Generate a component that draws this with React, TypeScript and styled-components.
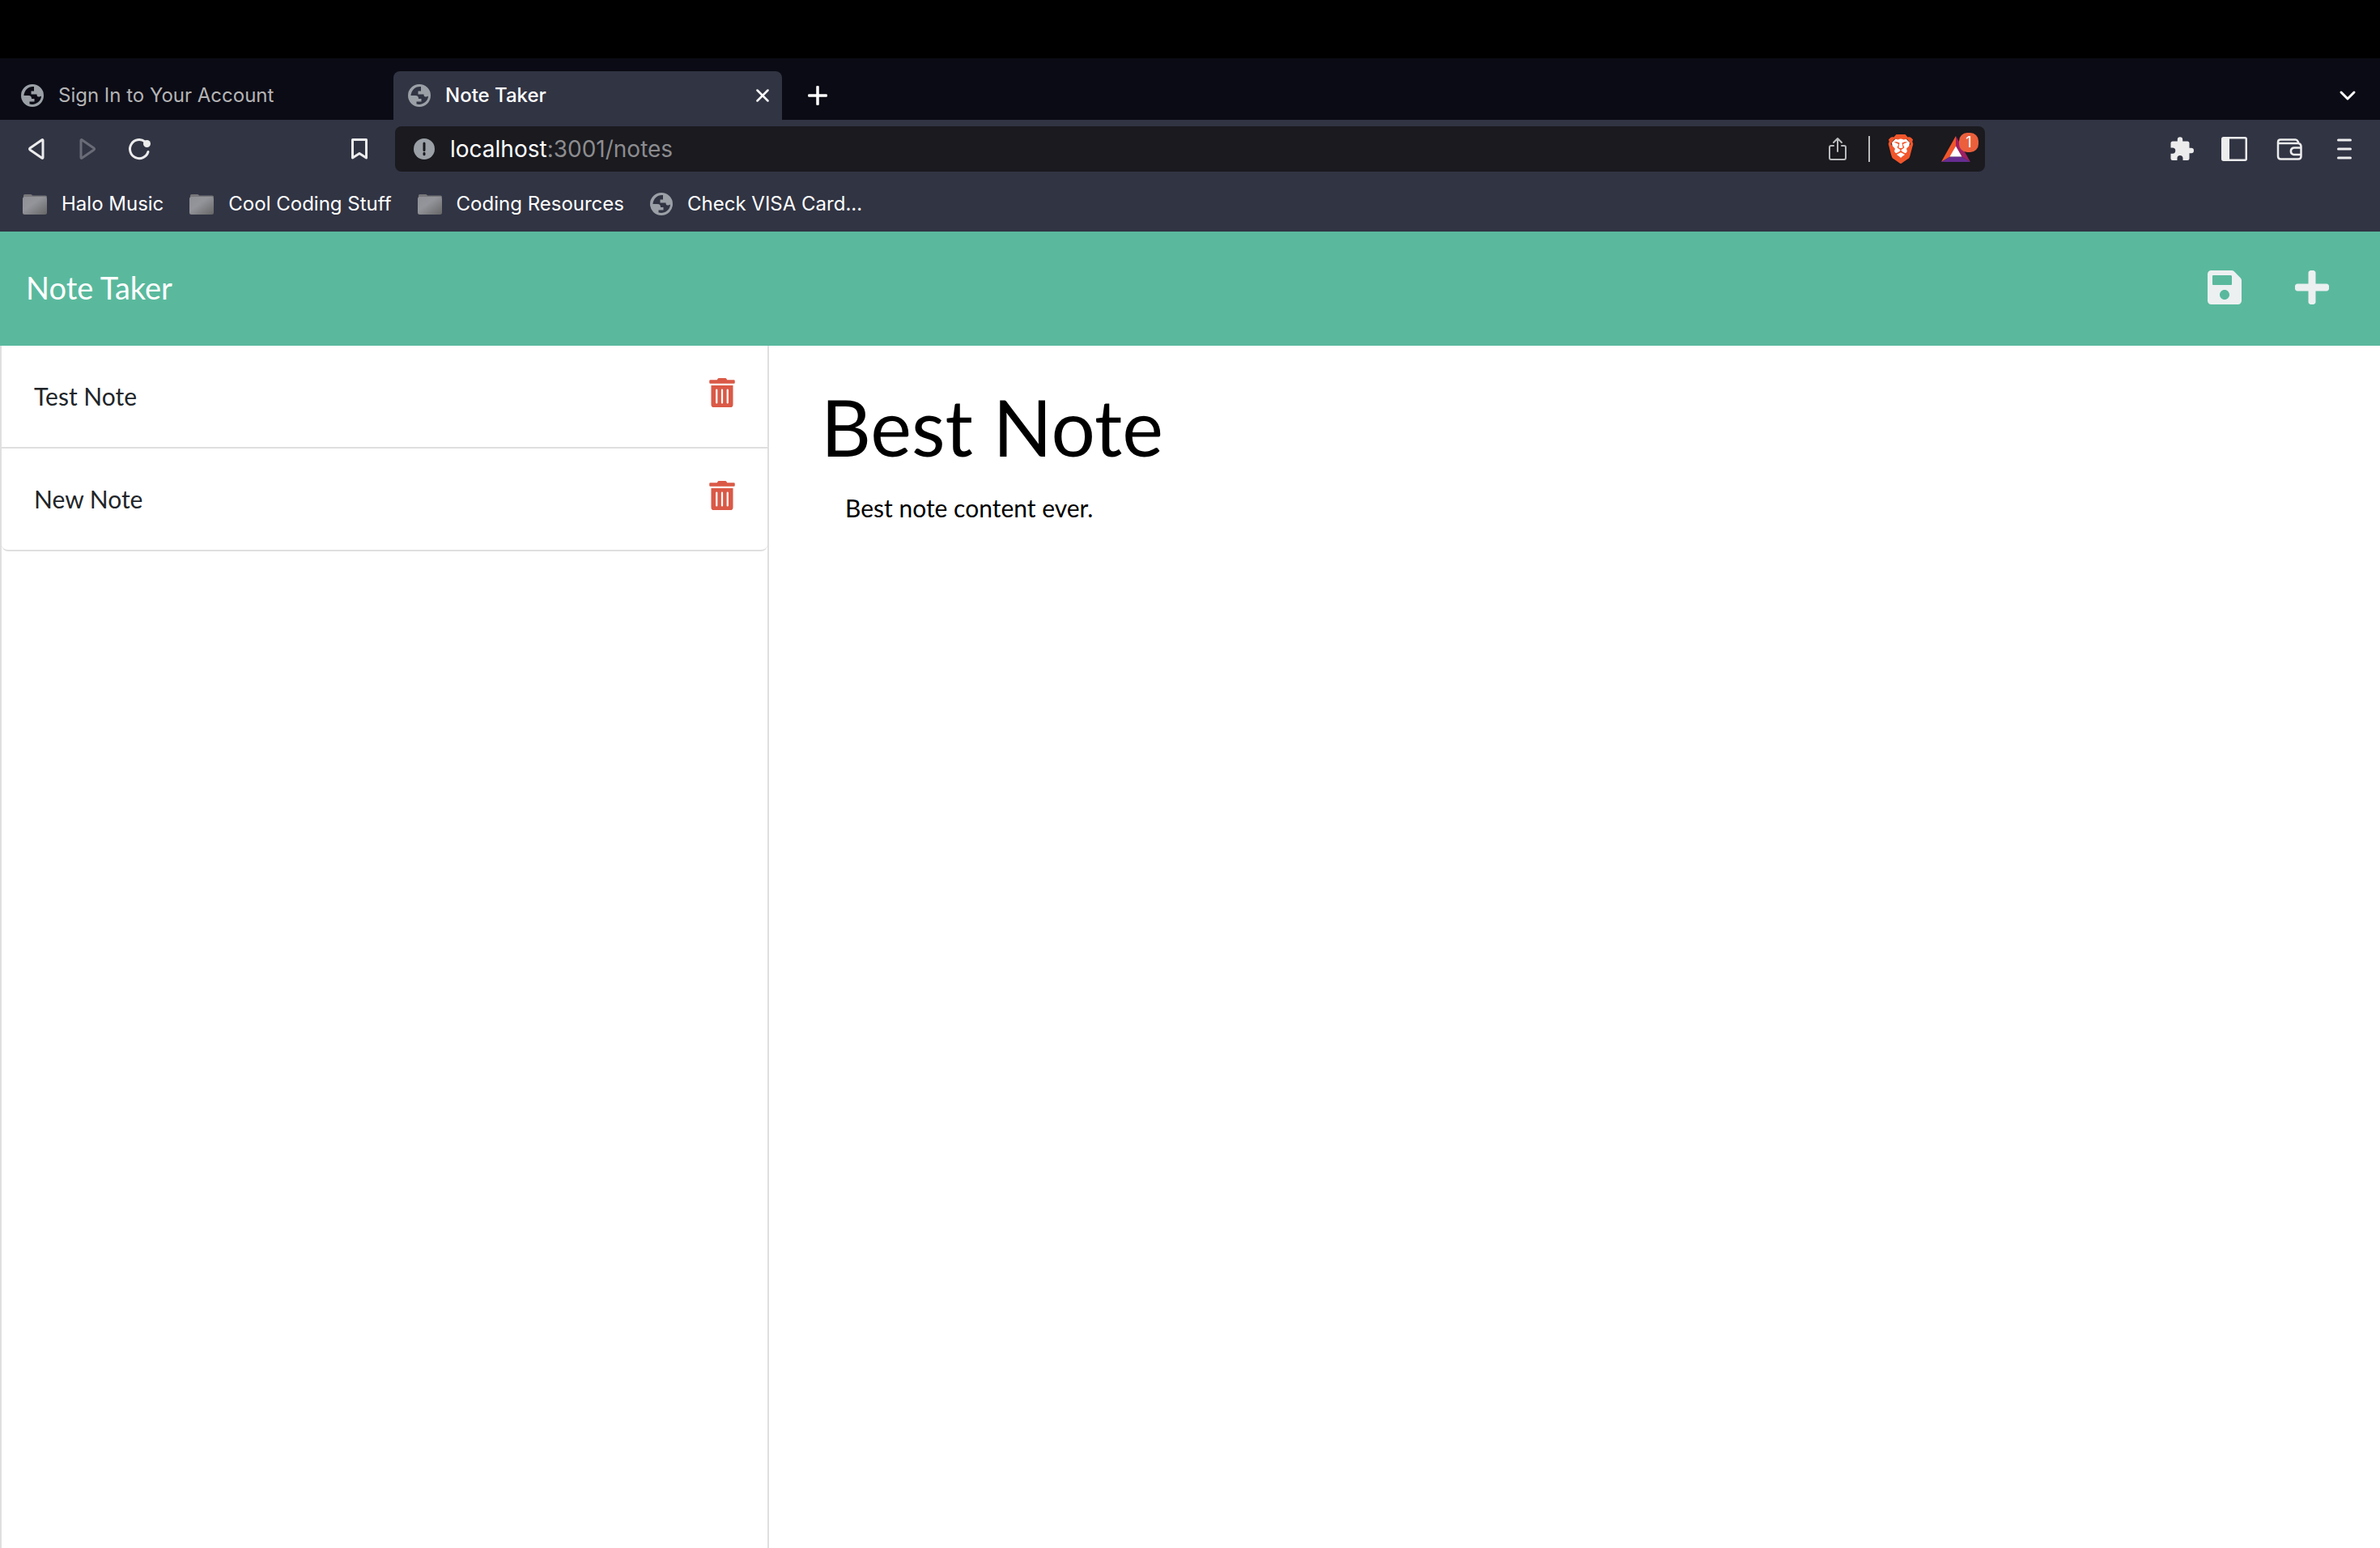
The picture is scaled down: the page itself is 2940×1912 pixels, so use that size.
import React, { useState } from "react";
import styled, { createGlobalStyle } from "styled-components";
import { FaPlus, FaSave, FaTrashAlt } from "react-icons/fa";
import { SiBrave } from "react-icons/si";

const GlobalStyle = createGlobalStyle`
  *, *::before, *::after { box-sizing: border-box; }
  body { margin: 0; background: #fff; }
  button, input, textarea { font: inherit; color: inherit; }
  button { border: 0; padding: 0; background: none; cursor: pointer; }
  svg { flex-shrink: 0; }
`;

const ui = `Inter, "Liberation Sans", sans-serif`;

const Window = styled.div`
  display: flex;
  flex-direction: column;
  min-height: 100vh;
  font-family: Lato, "Liberation Sans", sans-serif;
  font-size: 30px;
`;

const MenuBarSpace = styled.div`
  height: 72px;
  background: #000;
`;

const TabStrip = styled.div`
  display: flex;
  align-items: flex-end;
  height: 76px;
  padding-right: 28px;
  background: #0b0b15;
  color: #fff;
  font-family: ${ui};
  font-size: 24px;
  line-height: 32px;
`;

const Tab = styled.div<{ $active?: boolean }>`
  display: flex;
  align-items: center;
  width: ${(p) => (p.$active ? 480 : 486)}px;
  height: 60px;
  padding: 0 16px 0 ${(p) => (p.$active ? 18 : 26)}px;
  border-radius: 8px 8px 0 0;
  background: ${(p) => (p.$active ? "#313443" : "transparent")};
  color: ${(p) => (p.$active ? "#fff" : "#b4b4b5")};
  font-weight: ${(p) => (p.$active ? 500 : 400)};
`;

const TabTitle = styled.button`
  display: flex;
  flex: 1;
  align-items: center;
  gap: 18px;
  text-align: left;
`;

const StripButton = styled.button<{ $end?: boolean }>`
  display: flex;
  align-items: center;
  height: 60px;
  margin-left: ${(p) => (p.$end ? "auto" : "32px")};
`;

const CloseButton = styled.button`
  display: flex;
`;

const Toolbar = styled.div`
  display: flex;
  align-items: center;
  height: 72px;
  padding: 0 28px;
  background: #313443;
  color: #ececed;
`;

const NavButtons = styled.div`
  display: flex;
  flex: 0 0 460px;
  align-items: center;
  gap: 32px;
`;

const IconButton = styled.button<{ $dim?: boolean; $end?: boolean; $narrow?: boolean }>`
  display: flex;
  align-items: center;
  justify-content: center;
  width: ${(p) => (p.$narrow ? "24px" : "32px")};
  height: 36px;
  margin-left: ${(p) => (p.$end ? "auto" : "0")};
  margin-right: ${(p) => (p.$end ? "28px" : "0")};
  opacity: ${(p) => (p.$dim ? 0.3 : 1)};
`;

const AddressBar = styled.form`
  display: flex;
  flex: 1;
  align-items: center;
  height: 56px;
  padding: 0 8px 0 22px;
  border-radius: 8px;
  background: #1a1a1f;
  font-family: ${ui};
  font-size: 28px;
  line-height: 36px;
`;

const Address = styled.a`
  flex: 1;
  margin-left: 18px;
  color: #8c8c8f;
  text-decoration: none;
`;

const Host = styled.span`
  color: #fff;
`;

const Divider = styled.span`
  width: 2px;
  height: 32px;
  margin: 0 22px;
  background: #b9babb;
`;

const Rewards = styled.button`
  position: relative;
  display: flex;
  margin: 0 10px 0 34px;
`;

const Badge = styled.span`
  position: absolute;
  top: -4px;
  right: -10px;
  width: 24px;
  height: 24px;
  border-radius: 10px;
  background: #eb5f3c;
  color: #fff;
  font-size: 18px;
  line-height: 24px;
  text-align: center;
`;

const Extensions = styled.div`
  display: flex;
  flex: 0 0 460px;
  align-items: center;
  justify-content: flex-end;
  gap: 36px;
`;

const Bookmarks = styled.nav`
  display: flex;
  align-items: flex-start;
  gap: 32px;
  height: 66px;
  padding: 16px 28px 0;
  background: #313443;
  color: #fff;
  font-family: ${ui};
  font-size: 24px;
  line-height: 32px;
`;

const Bookmark = styled.a`
  display: flex;
  align-items: center;
  gap: 18px;
  color: inherit;
  text-decoration: none;
`;

const Header = styled.header`
  display: flex;
  align-items: center;
  justify-content: space-between;
  height: 141px;
  padding: 0 60px 4px 32px;
  background: #5ab99d;
`;

const Brand = styled.a`
  color: #fff;
  font-size: 38px;
  line-height: 56px;
  text-decoration: none;
`;

const Actions = styled.div`
  display: flex;
  gap: 60px;
  color: #ecf0f1;
  font-size: 48px;
`;

const Action = styled.button`
  display: flex;
`;

const Page = styled.main`
  display: flex;
  flex: 1;
`;

const Sidebar = styled.aside`
  width: 950px;
  border: solid #dfdfdf;
  border-width: 0 2px;
`;

const NoteList = styled.ul`
  margin: 0;
  padding: 0;
  list-style: none;
`;

const NoteRow = styled.li`
  display: flex;
  align-items: center;
  justify-content: space-between;
  height: 127px;
  padding: 0 38px 0 40px;
  border-bottom: 2px solid #dfdfdf;
  color: #212529;
  line-height: 45px;

  &:last-child {
    border-radius: 0 0 8px 8px;
  }
`;

const NoteName = styled.button`
  flex: 1;
  text-align: left;
`;

const DeleteButton = styled.button`
  display: flex;
  padding-bottom: 10px;
  color: #da5946;
  font-size: 36px;
`;

const Editor = styled.form`
  display: flex;
  flex: 1;
  flex-direction: column;
  padding: 42px 60px;
  color: #000;
`;

const TitleInput = styled.input`
  width: 100%;
  height: 116px;
  padding: 0 4px;
  border: 0;
  outline: 0;
  background: transparent;
  font-size: 96px;
  line-height: 116px;
`;

const TextInput = styled.textarea`
  width: 100%;
  height: 900px;
  padding: 20px 34px;
  border: 0;
  outline: 0;
  background: transparent;
  line-height: 45px;
  resize: none;
`;

const Globe = () => (
  <svg width="28" height="28" viewBox="0 0 28 28" aria-hidden="true">
    <path
      fill="#9aa0a6"
      fillRule="evenodd"
      d="M14 0a14 14 0 1 1 0 28a14 14 0 0 1 0-28zM16 3.100C9 2.500 4.500 7 3.400 14h5.600c3 0 4 1.500 4 4h3.500v3.500h-6v3C18 26.500 25 21 25 14.500c-1 .8-2 1-3.500 1c-1.500 0-2-1-2-3h-7V8.500h3.500V5z"
    />
  </svg>
);

const Folder = () => (
  <svg width="30" height="28" viewBox="1 0 30 28" aria-hidden="true">
    <defs>
      <linearGradient id="folder" x1="0" y1="0" x2="1" y2="1">
        <stop offset="0" stopColor="#8f9095" />
        <stop offset=".4" stopColor="#94959b" />
        <stop offset="1" stopColor="#666" />
      </linearGradient>
    </defs>
    <path d="M2 6V3.500Q2 2 3.500 2H11q1.500 0 2 1.500H29q2 0 2 2V6z" fill="#77777a" />
    <rect x="1" y="5" width="30" height="22" rx="2.500" fill="url(#folder)" />
  </svg>
);

const Back = ({ flip }: { flip?: boolean }) => (
  <svg width="32" height="32" viewBox="0 0 32 32" aria-hidden="true">
    <path
      d={flip ? "M8 5.500v21q0 1.500 1.500.500L24 17q1-1 0-2L9.500 5Q8 4 8 5.500z" : "M25 5.500v21q0 1.500-1.500.500L9 17q-1-1 0-2L23.500 5Q25 4 25 5.500z"}
      fill="none"
      stroke="currentColor"
      strokeWidth="3"
      strokeLinejoin="round"
    />
  </svg>
);

const Reload = () => (
  <svg width="32" height="32" viewBox="0 0 32 32" aria-hidden="true">
    <path d="M27 19.500A11.500 11.500 0 1 1 23 7" fill="none" stroke="currentColor" strokeWidth="3" strokeLinecap="round" />
    <circle cx="25.500" cy="9.500" r="4.500" fill="currentColor" />
  </svg>
);

const Ribbon = () => (
  <svg width="32" height="32" viewBox="0 0 32 32" aria-hidden="true">
    <path d="M7.500 4.500h17v22.500L16 21.500l-8.500 5.500z" fill="none" stroke="currentColor" strokeWidth="3" strokeLinejoin="round" />
  </svg>
);

const Info = () => (
  <svg width="28" height="28" viewBox="0 0 28 28" aria-hidden="true">
    <circle cx="14" cy="14" r="13" fill="#9aa0a6" />
    <path d="M14 7v8.500M14 19.200v1.600" stroke="#1a1a1f" strokeWidth="3" strokeLinecap="round" />
  </svg>
);

const Share = () => (
  <svg width="24" height="32" viewBox="0 0 24 32" aria-hidden="true">
    <path d="M7 12H4q-2 0-2 2v13q0 2 2 2h16q2 0 2-2V14q0-2-2-2h-3M12 19V3M7 8l5-5l5 5" fill="none" stroke="#b9babb" strokeWidth="2" strokeLinecap="round" strokeLinejoin="round" />
  </svg>
);

const Lion = () => (
  <svg width="36" height="36" viewBox="0 0 36 36" aria-hidden="true">
    <path d="M12 5h12l5 5-1 8-3 8-7 6-7-6-3-8-1-8z" fill="#fff" />
    <SiBrave width={36} height={36} size={36} color="#f1562b" />
  </svg>
);

const Triangle = () => (
  <svg width="36" height="32" viewBox="0 0 36 32" aria-hidden="true">
    <path d="M18 0L0 32l11-6.500L18 13z" fill="#f1562b" />
    <path d="M18 0l18 32-11-6.500L18 13z" fill="#9e1f63" />
    <path d="M0 32h36l-11-6.500H11z" fill="#662d91" />
    <path d="M18 12.500L25.500 25.500h-15z" fill="#fff" />
  </svg>
);

const Puzzle = () => (
  <svg width="30" height="30" viewBox="0 0 30 30" aria-hidden="true">
    <path
      d="M8.800 5.500V3.400a3.200 3.200 0 0 1 6.400 0V5.500H21q2.500 0 2.500 2.500v5.800h2.300a3.200 3.200 0 0 1 0 6.400h-2.300V26.500q0 2.500-2.500 2.500h-5.500v-2.500a3.500 3.500 0 0 0-7 0V29H3q-2.500 0-2.500-2.500v-5.800h2.200a3.600 3.600 0 0 0 0-7.200H.500V8q0-2.500 2.500-2.500z"
      fill="currentColor"
    />
  </svg>
);

const Panel = () => (
  <svg width="32" height="32" viewBox="0 0 32 32" aria-hidden="true">
    <rect x="1.250" y="2.250" width="29.500" height="27.500" rx="1.500" fill="none" stroke="currentColor" strokeWidth="2.500" />
    <path d="M1 2h9v28H1z" fill="currentColor" />
  </svg>
);

const Wallet = () => (
  <svg width="32" height="32" viewBox="0 0 32 32" aria-hidden="true">
    <path d="M2 7.500q0-3 3-3h18.500q2 0 3 2l1 2.500q3 1 3 4v12q0 3.500-3.500 3.500H5.500Q2 28.500 2 25zM2 7.500q0 1.500 2.500 1.500H28M30 14.500h-8.500a4.300 4.300 0 0 0 0 8.500H30" fill="none" stroke="currentColor" strokeWidth="2.500" />
  </svg>
);

const Menu = () => (
  <svg width="32" height="32" viewBox="0 0 32 32" aria-hidden="true">
    <path d="M8.500 5h15M8.500 16h15M8.500 27h15" stroke="currentColor" strokeWidth="3" strokeLinecap="round" />
  </svg>
);

const folders = ["Halo Music", "Cool Coding Stuff", "Coding Resources"];

export default function App() {
  const [notes, setNotes] = useState(["Test Note", "New Note"]);
  const [title, setTitle] = useState("Best Note");
  const [text, setText] = useState("Best note content ever.");

  return (
    <Window>
      <GlobalStyle />
      <MenuBarSpace />
      <TabStrip>
        <Tab>
          <TabTitle><Globe />Sign In to Your Account</TabTitle>
        </Tab>
        <Tab $active>
          <TabTitle><Globe />Note Taker</TabTitle>
          <CloseButton aria-label="Close tab">
            <svg width="16" height="16" viewBox="0 0 16 16"><path d="M1.500 1.500l13 13M14.500 1.500l-13 13" stroke="#fff" strokeWidth="2.500" strokeLinecap="round" /></svg>
          </CloseButton>
        </Tab>
        <StripButton aria-label="New tab">
          <svg width="24" height="24" viewBox="0 0 24 24"><path d="M12 1.500v21M1.500 12h21" stroke="#fff" strokeWidth="3.500" strokeLinecap="round" /></svg>
        </StripButton>
        <StripButton $end aria-label="Search tabs">
          <svg width="24" height="16" viewBox="0 0 24 16"><path d="M4 4l8 8l8-8" fill="none" stroke="#fff" strokeWidth="3" strokeLinecap="round" strokeLinejoin="round" /></svg>
        </StripButton>
      </TabStrip>
      <Toolbar>
        <NavButtons>
          <IconButton aria-label="Back"><Back /></IconButton>
          <IconButton aria-label="Forward" $dim><Back flip /></IconButton>
          <IconButton aria-label="Reload"><Reload /></IconButton>
          <IconButton aria-label="Bookmark this page" $end><Ribbon /></IconButton>
        </NavButtons>
        <AddressBar onSubmit={(e) => e.preventDefault()}>
          <Info />
          <Address href="#notes"><Host>localhost</Host>:3001/notes</Address>
          <IconButton type="button" aria-label="Share"><Share /></IconButton>
          <Divider />
          <IconButton type="button" aria-label="Shields"><Lion /></IconButton>
          <Rewards type="button" aria-label="Rewards"><Triangle /><Badge>1</Badge></Rewards>
        </AddressBar>
        <Extensions>
          <IconButton aria-label="Extensions" $narrow><Puzzle /></IconButton>
          <IconButton aria-label="Side panel"><Panel /></IconButton>
          <IconButton aria-label="Wallet"><Wallet /></IconButton>
          <IconButton aria-label="Menu"><Menu /></IconButton>
        </Extensions>
      </Toolbar>
      <Bookmarks>
        {folders.map((name) => (
          <Bookmark href="#folder" key={name}><Folder />{name}</Bookmark>
        ))}
        <Bookmark href="#visa"><Globe />Check VISA Card...</Bookmark>
      </Bookmarks>
      <Header>
        <Brand href="#home">Note Taker</Brand>
        <Actions>
          <Action type="submit" form="editor" aria-label="Save note"><FaSave /></Action>
          <Action aria-label="New note" onClick={() => { setTitle(""); setText(""); }}><FaPlus /></Action>
        </Actions>
      </Header>
      <Page>
        <Sidebar>
          <NoteList>
            {notes.map((note) => (
              <NoteRow key={note}>
                <NoteName onClick={() => setTitle(note)}>{note}</NoteName>
                <DeleteButton aria-label={`Delete ${note}`} onClick={() => setNotes(notes.filter((n) => n !== note))}>
                  <FaTrashAlt />
                </DeleteButton>
              </NoteRow>
            ))}
          </NoteList>
        </Sidebar>
        <Editor
          id="editor"
          onSubmit={(e) => {
            e.preventDefault();
            if (title && !notes.includes(title)) setNotes([...notes, title]);
          }}
        >
          <TitleInput aria-label="Note title" value={title} onChange={(e) => setTitle(e.target.value)} />
          <TextInput aria-label="Note text" value={text} onChange={(e) => setText(e.target.value)} />
        </Editor>
      </Page>
    </Window>
  );
}
